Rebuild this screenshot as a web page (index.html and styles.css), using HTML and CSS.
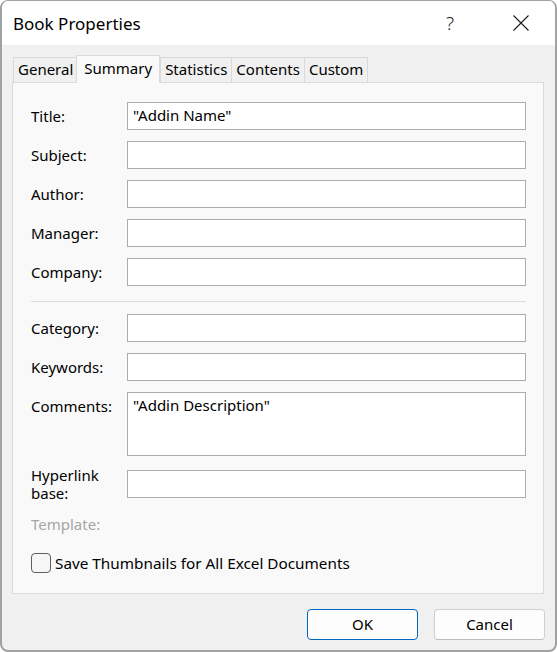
FILE: index.html
```html
<!DOCTYPE html>
<html lang="en">
<head>
    <meta charset="UTF-8">
    <title>Book Properties</title>
    <link rel="stylesheet" href="styles.css">
</head>
<body>
<div class="window">
    <div class="titlebar">
        <span class="title">Book Properties</span>
        <span class="help">?</span>
        <span class="close">
            <svg width="16" height="16" viewBox="0 0 16 16"><path d="M0.5 0.5L15.5 15.5M15.5 0.5L0.5 15.5" stroke="#1a1a1a" stroke-width="1.1" fill="none"/></svg>
        </span>
    </div>
    <div class="main">
        <div class="tabs">
            <span class="tab">General</span>
            <span class="tab active">Summary</span>
            <span class="tab">Statistics</span>
            <span class="tab">Contents</span>
            <span class="tab">Custom</span>
        </div>
        <div class="panel">
            <div class="row"><label>Title:</label><div class="field">"Addin Name"</div></div>
            <div class="row"><label>Subject:</label><div class="field"></div></div>
            <div class="row"><label>Author:</label><div class="field"></div></div>
            <div class="row"><label>Manager:</label><div class="field"></div></div>
            <div class="row"><label>Company:</label><div class="field"></div></div>
            <div class="sep"></div>
            <div class="row"><label>Category:</label><div class="field"></div></div>
            <div class="row"><label>Keywords:</label><div class="field"></div></div>
            <div class="row comments"><label>Comments:</label><div class="field area">"Addin Description"</div></div>
            <div class="row link"><label class="two">Hyperlink<br>base:</label><div class="field"></div></div>
            <div class="row"><label class="dim">Template:</label></div>
            <div class="check"><span class="box"></span>Save Thumbnails for All Excel Documents</div>
        </div>
        <div class="buttons">
            <button class="btn ok">OK</button>
            <button class="btn">Cancel</button>
        </div>
    </div>
</div>
</body>
</html>
```

FILE: styles.css
```css
body{margin:0;background:#fff;font-family:"Noto Sans","Open Sans",sans-serif;font-size:15px;color:#000;}
.window{width:557px;height:652px;box-sizing:border-box;border:2px solid #a2a2a2;border-top-width:1px;border-radius:8px;background:#f0f0f0;overflow:hidden;}
.titlebar{height:44px;background:#fff;display:flex;align-items:center;}
.titlebar .title{padding-left:11px;font-size:17px;flex:1;}
.titlebar .help{width:20px;text-align:center;font-size:19px;font-weight:300;color:#222;margin-right:53px;}
.titlebar .close{display:flex;padding-right:26px;}

.main{padding:10px 10px 0 10px;}
.tabs{display:flex;align-items:flex-end;height:27px;padding-left:1px;}
.tab{height:25px;box-sizing:border-box;border:1px solid #dadada;border-bottom:none;background:#f0f0f0;padding:0 4px;line-height:23px;margin-right:-1px;}
.tab.active{height:28px;margin-bottom:-1px;background:#f9f9f9;position:relative;z-index:1;padding:0 7px;line-height:24px;margin-left:-1px;margin-right:0;}

.panel{width:532px;height:512px;box-sizing:border-box;border:1px solid #dadada;background:#f9f9f9;padding:19px 17px 0 18px;}
.row{display:flex;align-items:flex-start;margin-bottom:11px;}
.row label{width:96px;flex:none;line-height:28px;}
.row label.two{line-height:18px;margin-top:-4px;}
.row label.dim{color:#a6a6a6;}
.field{flex:1;height:28px;box-sizing:border-box;border:1px solid #acacac;background:#fff;padding:0 5px;line-height:25px;}
.field.area{height:64px;}
.row.comments{margin-bottom:14px;}
.row.link{margin-bottom:8px;}
.sep{height:1px;background:#dcdcdc;margin:15px 0 12px 0;}

.check{display:flex;align-items:center;margin-top:15px;font-size:15.3px;}
.check .box{width:20px;height:20px;box-sizing:border-box;border:1px solid #5e5e5e;border-radius:4px;background:#f6f6f6;margin-right:4px;}

.buttons{display:flex;justify-content:flex-end;gap:16px;margin-top:15px;}
.btn{width:111px;height:31px;box-sizing:border-box;border:1px solid #d0d0d0;border-bottom-color:#bcbcbc;border-radius:4px;background:#fdfdfd;font-family:inherit;font-size:15px;color:#000;padding:0 0 2px 0;}
.btn.ok{border-color:#0067c0;}
```
